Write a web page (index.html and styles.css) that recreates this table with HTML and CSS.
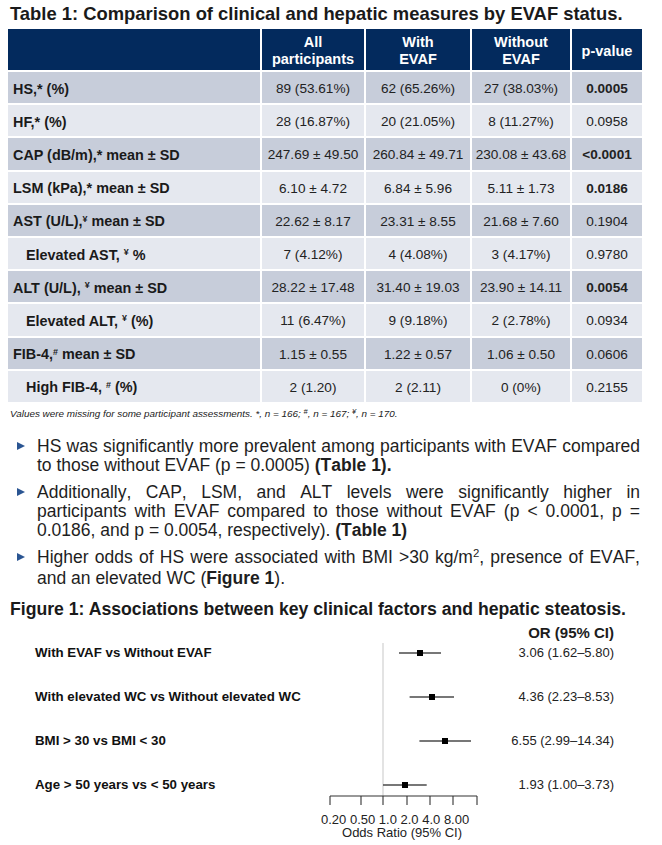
FILE: index.html
```html
<!DOCTYPE html>
<html>
<head>
<meta charset="utf-8">
<link rel="stylesheet" href="styles.css">
</head>
<body>
<div class="page">
  <h1 class="title">Table 1: Comparison of clinical and hepatic measures by EVAF status.</h1>
  <table class="tbl">
    <colgroup>
      <col class="c-label"><col class="c-all"><col class="c-with"><col class="c-without"><col class="c-p">
    </colgroup>
    <thead>
      <tr><th></th><th>All<br>participants</th><th>With<br>EVAF</th><th>Without<br>EVAF</th><th>p-value</th></tr>
    </thead>
    <tbody>
      <tr class="dark"><td class="lbl">HS,* (%)</td><td>89 (53.61%)</td><td>62 (65.26%)</td><td>27 (38.03%)</td><td class="sig">0.0005</td></tr>
      <tr class="light"><td class="lbl">HF,* (%)</td><td>28 (16.87%)</td><td>20 (21.05%)</td><td>8 (11.27%)</td><td>0.0958</td></tr>
      <tr class="dark"><td class="lbl">CAP (dB/m),* mean ± SD</td><td>247.69 ± 49.50</td><td>260.84 ± 49.71</td><td>230.08 ± 43.68</td><td class="sig">&lt;0.0001</td></tr>
      <tr class="light"><td class="lbl">LSM (kPa),* mean ± SD</td><td>6.10 ± 4.72</td><td>6.84 ± 5.96</td><td>5.11 ± 1.73</td><td class="sig">0.0186</td></tr>
      <tr class="dark"><td class="lbl">AST (U/L),<sup>¥</sup> mean ± SD</td><td>22.62 ± 8.17</td><td>23.31 ± 8.55</td><td>21.68 ± 7.60</td><td>0.1904</td></tr>
      <tr class="light"><td class="lbl sub">Elevated AST, <sup>¥</sup> %</td><td>7 (4.12%)</td><td>4 (4.08%)</td><td>3 (4.17%)</td><td>0.9780</td></tr>
      <tr class="dark"><td class="lbl">ALT (U/L), <sup>¥</sup> mean ± SD</td><td>28.22 ± 17.48</td><td>31.40 ± 19.03</td><td>23.90 ± 14.11</td><td class="sig">0.0054</td></tr>
      <tr class="light"><td class="lbl sub">Elevated ALT, <sup>¥</sup> (%)</td><td>11 (6.47%)</td><td>9 (9.18%)</td><td>2 (2.78%)</td><td>0.0934</td></tr>
      <tr class="dark"><td class="lbl">FIB-4,<sup>#</sup> mean ± SD</td><td>1.15 ± 0.55</td><td>1.22 ± 0.57</td><td>1.06 ± 0.50</td><td>0.0606</td></tr>
      <tr class="light"><td class="lbl sub">High FIB-4, <sup>#</sup> (%)</td><td>2 (1.20)</td><td>2 (2.11)</td><td>0 (0%)</td><td>0.2155</td></tr>
    </tbody>
  </table>
  <p class="foot">Values were missing for some participant assessments. *, <i>n</i> = 166; <sup>#</sup>, <i>n</i> = 167; <sup>¥</sup>, <i>n</i> = 170.</p>

  <ul class="bullets">
    <li>HS was significantly more prevalent among participants with EVAF compared to those without EVAF (p = 0.0005) <b>(Table 1).</b></li>
    <li>Additionally, CAP, LSM, and ALT levels were significantly higher in participants with EVAF compared to those without EVAF (p &lt; 0.0001, p = 0.0186, and p = 0.0054, respectively). <b>(Table 1)</b></li>
    <li>Higher odds of HS were associated with BMI &gt;30 kg/m<sup>2</sup>, presence of EVAF, and an elevated WC (<b>Figure 1</b>).</li>
  </ul>

  <h2 class="fig-title">Figure 1: Associations between key clinical factors and hepatic steatosis.</h2>
  <div class="or-head">OR (95% CI)</div>
  <div class="forest">
    <div class="f-labels">
      <div class="f-row">With EVAF vs Without EVAF</div>
      <div class="f-row">With elevated WC vs Without elevated WC</div>
      <div class="f-row">BMI &gt; 30 vs BMI &lt; 30</div>
      <div class="f-row">Age &gt; 50 years vs &lt; 50 years</div>
    </div>
    <svg class="f-plot" width="180" height="207" viewBox="0 0 180 207">
      <line x1="73" y1="2" x2="73" y2="155" stroke="#dcdcdc" stroke-width="1.6"/>
      <g stroke="#4a4a4a" stroke-width="1.4">
        <line x1="89" y1="12" x2="131" y2="12"/>
        <line x1="99.6" y1="56" x2="144" y2="56"/>
        <line x1="109.4" y1="100" x2="161" y2="100"/>
        <line x1="73" y1="144" x2="116.7" y2="144"/>
      </g>
      <g fill="#000">
        <rect x="107" y="9" width="6" height="6"/>
        <rect x="119" y="53" width="6" height="6"/>
        <rect x="132" y="97" width="6" height="6"/>
        <rect x="92" y="141" width="6" height="6"/>
      </g>
      <g stroke="#333" stroke-width="1.1" fill="none">
        <line x1="20" y1="155" x2="167" y2="155"/>
        <line x1="20" y1="155" x2="20" y2="164"/>
        <line x1="51" y1="155" x2="51" y2="164"/>
        <line x1="73" y1="155" x2="73" y2="164"/>
        <line x1="97" y1="155" x2="97" y2="164"/>
        <line x1="120" y1="155" x2="120" y2="164"/>
        <line x1="143" y1="155" x2="143" y2="164"/>
        <line x1="167" y1="155" x2="167" y2="164"/>
      </g>
      <text class="ticks" x="11" y="183" xml:space="preserve">0.20 0.50 1.0 2.0 4.0 8.00</text>
      <text class="axis-title" x="92" y="196" text-anchor="middle">Odds Ratio (95% CI)</text>
    </svg>
    <div class="f-vals">
      <div class="f-row">3.06 (1.62–5.80)</div>
      <div class="f-row">4.36 (2.23–8.53)</div>
      <div class="f-row">6.55 (2.99–14.34)</div>
      <div class="f-row">1.93 (1.00–3.73)</div>
    </div>
  </div>
</div>
</body>
</html>
```
FILE: styles.css
```css
* { box-sizing: border-box; }
html, body { margin: 0; padding: 0; background: #fff; }
body {
  font-family: "Liberation Sans", Arial, sans-serif;
  color: #1c1c1c;
  width: 662px;
  height: 845px;
  overflow: hidden;
}
.page { padding-top: 3px; }

.title {
  margin: 0 0 4px 10px;
  font-size: 18.4px;
  line-height: 22px;
  font-weight: bold;
  color: #1a1a1a;
}

.tbl {
  margin-left: 8px;
  width: 634px;
  table-layout: fixed;
  border-collapse: separate;
  border-spacing: 0;
}
.c-label { width: 254px; }
.c-all { width: 104px; }
.c-with { width: 106px; }
.c-without { width: 100px; }
.c-p { width: 70px; }

.tbl th, .tbl td {
  border-right: 2px solid #fff;
  border-bottom: 2px solid #fff;
  padding: 0;
  text-align: center;
  vertical-align: middle;
}
.tbl th:last-child, .tbl td:last-child { border-right: 0; }
.tbl th {
  background: #032a5d;
  color: #fff;
  font-size: 14.5px;
  line-height: 17px;
  font-weight: bold;
  height: 43px;
  padding-top: 3px;
}
.tbl td {
  height: 33.2px;
  padding-top: 2px;
  font-size: 13.6px;
  color: #222;
}
.tbl tr.dark td { background: #c7cdda; }
.tbl tr.light td { background: #e5e8ef; }
.tbl td.lbl {
  text-align: left;
  padding-left: 5px;
  font-weight: bold;
  font-size: 14.4px;
  color: #1a1a1a;
}
.tbl td.lbl.sub { padding-left: 18px; }
.tbl td.sig { font-weight: bold; }
.tbl sup {
  font-size: 0.62em;
  vertical-align: baseline;
  position: relative;
  top: -0.5em;
}

.foot {
  margin: 4px 0 0 10px;
  font-size: 9.9px;
  line-height: 12px;
  font-style: italic;
  color: #222;
}
.foot sup {
  font-size: 0.75em;
  vertical-align: baseline;
  position: relative;
  top: -0.45em;
}

.bullets {
  list-style: none;
  margin: 16px 0 0 0;
  padding: 0 22px 0 37px;
  font-size: 17.5px;
  line-height: 19px;
  font-kerning: none;
  color: #1e1e1e;
  text-align: justify;
}
.bullets li { position: relative; }
.bullets li + li { margin-top: 8px; }
.bullets li::before {
  content: "";
  position: absolute;
  left: -20px;
  top: 5px;
  border-left: 8px solid #2a5592;
  border-top: 4.5px solid transparent;
  border-bottom: 4.5px solid transparent;
}
.bullets sup {
  font-size: 0.65em;
  vertical-align: baseline;
  position: relative;
  top: -0.5em;
}

.fig-title {
  margin: 10px 0 0 10px;
  font-size: 17.65px;
  line-height: 22px;
  font-weight: bold;
  color: #1a1a1a;
}
.or-head {
  width: 614px;
  text-align: right;
  font-size: 15px;
  line-height: 16px;
  font-weight: bold;
  margin-top: 5px;
}
.forest {
  display: grid;
  grid-template-columns: 275px 180px 124px;
  padding-left: 35px;
}
.f-row {
  height: 44px;
  line-height: 24px;
  white-space: nowrap;
}
.f-labels .f-row { font-weight: bold; color: #111; font-size: 13.3px; }
.f-vals .f-row { text-align: right; color: #222; font-size: 13px; }
.f-plot { display: block; }
.ticks {
  font-family: "Liberation Sans", Arial, sans-serif;
  font-size: 13px;
  fill: #222;
}
.axis-title {
  font-family: "Liberation Sans", Arial, sans-serif;
  font-size: 13px;
  fill: #222;
}
```
